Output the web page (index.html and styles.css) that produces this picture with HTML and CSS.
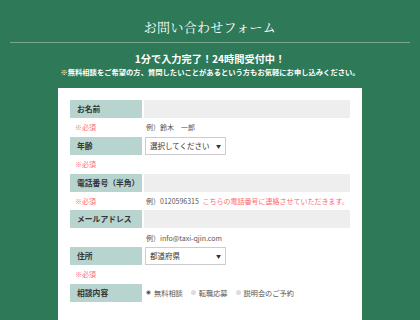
FILE: index.html
```html
<!DOCTYPE html>
<html lang="ja">
<head>
    <meta charset="UTF-8">
    <meta name="viewport" content="width=device-width, initial-scale=1.0">
    <title>お問い合わせフォーム</title>
    <link rel="stylesheet" href="styles.css">
</head>
<body>

    <!-- Page heading -->
    <h1 class="page-title">お問い合わせフォーム</h1>
    <p class="lead">1分で入力完了！24時間受付中！</p>
    <p class="sub">※無料相談をご希望の方、質問したいことがあるという方もお気軽にお申し込みください。</p>

    <!-- Form -->
    <form class="contact-form">
        <div class="field">
            <div class="field-label">お名前</div>
            <div class="text-input"></div>
        </div>
        <div class="note">
            <span class="required">※必須</span>
            <span class="example">例）鈴木　一郎</span>
        </div>

        <div class="field">
            <div class="field-label">年齢</div>
            <div class="select-box">選択してください<span class="arrow">▼</span></div>
        </div>
        <div class="note">
            <span class="required">※必須</span>
        </div>

        <div class="field">
            <div class="field-label">電話番号（半角）</div>
            <div class="text-input"></div>
        </div>
        <div class="note">
            <span class="required">※必須</span>
            <span class="example">例）0120596315 <span class="warn">こちらの電話番号に連絡させていただきます。</span></span>
        </div>

        <div class="field">
            <div class="field-label">メールアドレス</div>
            <div class="text-input"></div>
        </div>
        <div class="note">
            <span class="required"></span>
            <span class="example">例）info@taxi-qjin.com</span>
        </div>

        <div class="field">
            <div class="field-label">住所</div>
            <div class="select-box">都道府県<span class="arrow">▼</span></div>
        </div>
        <div class="note">
            <span class="required">※必須</span>
        </div>

        <div class="field">
            <div class="field-label">相談内容</div>
            <div class="radio-group">
                <span class="radio checked"></span>無料相談
                <span class="radio"></span>転職応募
                <span class="radio"></span>説明会のご予約
            </div>
        </div>
        <div class="note"></div>
    </form>

</body>
</html>
```

FILE: styles.css
```css
body {
    margin: 0;
    font-family: "Noto Sans CJK JP", "Noto Sans", sans-serif;
    background-color: #2e7957;
    color: white;
}

.page-title {
    margin: 0 10px;
    padding: 19px 0 7px;
    font-family: "Noto Serif CJK JP", "Liberation Serif", "Noto Sans CJK JP", serif;
    font-weight: normal;
    font-size: 13px;
    line-height: 16px;
    letter-spacing: 0.3px;
    text-align: center;
    border-bottom: 1px solid #7aa68f;
}

.lead {
    margin: 9px 0 0;
    font-size: 10.2px;
    line-height: 14px;
    font-weight: bold;
    text-align: center;
}

.sub {
    margin: 1px 0 0;
    font-size: 7.3px;
    line-height: 10px;
    font-weight: bold;
    text-align: center;
}

.contact-form {
    width: 280px;
    margin: 11px auto 0;
    padding: 12px 12px;
    background-color: white;
    color: #333;
}

.field {
    display: grid;
    grid-template-columns: 72px 1fr;
    column-gap: 2px;
    height: 18px;
}

.field-label {
    background-color: #b7d4ce;
    font-size: 7.8px;
    font-weight: bold;
    line-height: 18px;
    padding-left: 7px;
}

.text-input {
    background-color: #eeeeee;
}

.select-box {
    margin-left: 1px;
    border: 1px solid #cccccc;
    box-sizing: border-box;
    width: 81px;
    font-size: 7.5px;
    line-height: 16px;
    padding: 0 4px;
    display: flex;
    justify-content: space-between;
}

.arrow {
    font-size: 5px;
}

.note {
    display: grid;
    grid-template-columns: 74px 1fr;
    height: 18.75px;
    align-items: center;
    font-size: 7px;
}

.required {
    color: #ff6b6b;
    padding-left: 5px;
}

.example {
    color: #555;
    padding-left: 2px;
}

.warn {
    color: #ff6b6b;
    margin-left: 2px;
}

.radio-group {
    display: flex;
    align-items: center;
    font-size: 7.2px;
    color: #555;
    padding-left: 2px;
}

.radio {
    width: 5px;
    height: 5px;
    border-radius: 50%;
    background-color: #dddddd;
    margin: 0 3px 0 8px;
}

.radio:first-child {
    margin-left: 0;
}

.radio.checked {
    box-sizing: border-box;
    border: 1.5px solid #cccccc;
    background-color: #555;
}
```
